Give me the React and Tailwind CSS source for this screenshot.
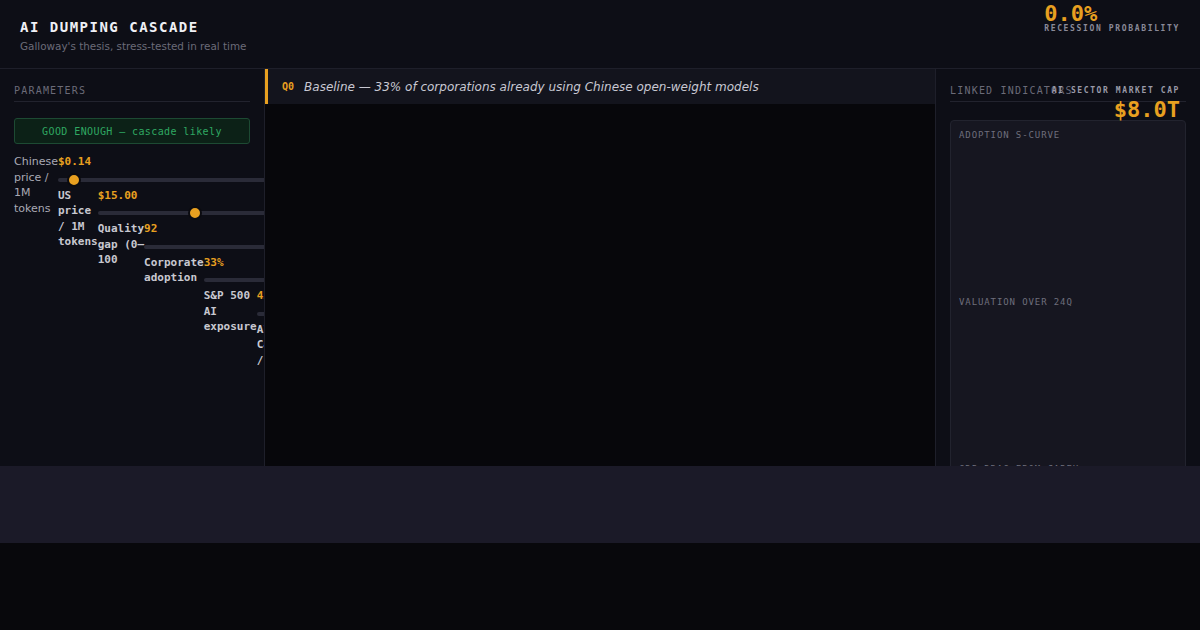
import React from "react";

const MONO = { fontFamily: '"DejaVu Sans Mono", monospace' };
const SANS = { fontFamily: '"DejaVu Sans", sans-serif' };

const PARAMS = [
  { label: "Chinese price / 1M tokens", value: "$0.14", thumb: 16, plain: true },
  { label: "US price / 1M tokens", value: "$15.00", thumb: 97 },
  { label: "Quality gap (0–100", value: "92", thumb: 150 },
  { label: "Corporate adoption", value: "33%", thumb: 90 },
  { label: "S&P 500 AI exposure", value: "42%", thumb: 80 },
  { label: "AI Capex / GDP", value: "1.8%", thumb: 60 },
];

function Param({ i }) {
  const p = PARAMS[i];
  return (
    <div className="flex">
      <div
        className={`w-min shrink-0 text-[11px] leading-[15.5px] ${
          p.plain ? "text-[#a9a9b4]" : "font-bold text-[#c8c8d0]"
        }`}
        style={p.plain ? SANS : MONO}
      >
        {p.label}
      </div>
      <div className="flex-1 min-w-0">
        <div className="text-[11px] leading-[15.5px] font-bold text-[#e8a020]" style={MONO}>
          {p.value}
        </div>
        <div className="relative w-[420px] h-1 mt-2 mb-1.5 rounded-full bg-[#2a2b38]">
          <div
            className="absolute top-1/2 w-[14px] h-[14px] -translate-x-1/2 -translate-y-1/2 rounded-full bg-[#e8a020] border-2 border-[#0b0b10]"
            style={{ left: p.thumb }}
          />
        </div>
        {i + 1 < PARAMS.length && <Param i={i + 1} />}
      </div>
    </div>
  );
}

function SectionTitle({ children }) {
  return (
    <div
      className="text-[10px] leading-[14px] tracking-[1.2px] text-[#6b6b78] pt-px pb-[3px] border-b border-[#22232e]"
      style={MONO}
    >
      {children}
    </div>
  );
}

export default function App() {
  return (
    <div className="w-[1200px] h-[630px] bg-[#08080c] overflow-hidden">
      <header className="relative h-[69px] bg-[#0d0e16] border-b border-[#1e1f2a] pl-5 pt-[17px]">
        <h1 className="text-[14px] leading-5 font-bold tracking-[1.5px] text-[#f0f0f5]" style={MONO}>
          AI DUMPING CASCADE
        </h1>
        <p className="mt-0.5 text-[10.4px] leading-[14px] text-[#6b6b78]" style={SANS}>
          Galloway's thesis, stress-tested in real time
        </p>
        <div className="absolute top-[3px] right-5" style={MONO}>
          <div className="text-[22px] leading-none font-bold text-[#e8a020]">0.0%</div>
          <div className="text-[8px] leading-[8px] font-bold tracking-[1.65px] text-[#8a8a98]">
            RECESSION PROBABILITY
          </div>
        </div>
      </header>

      <main className="flex h-[397px] overflow-hidden">
        <aside className="w-[265px] shrink-0 bg-[#0d0e16] border-r border-[#1e1f2a] px-3.5 pt-3.5 overflow-hidden">
          <SectionTitle>PARAMETERS</SectionTitle>
          <div
            className="mt-4 h-[26px] flex items-center justify-center rounded-[3px] bg-[#0c2117] border border-[#1d4a33] text-[10px] font-medium tracking-[0.4px] text-[#2fa862]"
            style={MONO}
          >
            GOOD ENOUGH — cascade likely
          </div>
          <div className="mt-2.5 -mr-3.5">
            <Param i={0} />
          </div>
        </aside>

        <section className="w-[670px] shrink-0 bg-[#07070b]">
          <div className="h-[35px] flex items-center gap-2.5 bg-[#13141d] border-l-[3px] border-[#e8a020] pl-3.5">
            <span className="text-[10px] font-bold text-[#e8a020]" style={MONO}>
              Q0
            </span>
            <span className="text-[12px] italic text-[#c8c8d2]" style={SANS}>
              Baseline — 33% of corporations already using Chinese open-weight models
            </span>
          </div>
        </section>

        <aside className="relative flex-1 bg-[#0d0e16] border-l border-[#1e1f2a] px-3.5 pt-3.5">
          <SectionTitle>LINKED INDICATORS</SectionTitle>
          <div className="absolute top-[18px] right-5 text-right" style={MONO}>
            <div className="text-[8px] leading-[8px] font-bold tracking-[1.6px] text-[#9a9aa8]">
              AI SECTOR MARKET CAP
            </div>
            <div className="mt-1 text-[22px] leading-none font-bold text-[#e8a020]">$8.0T</div>
          </div>
          <div className="mt-[18px] rounded bg-[#161620] border border-[#22232e] px-2 pt-2">
            {["ADOPTION S-CURVE", "VALUATION OVER 24Q", "GDP DRAG FROM CAPEX"].map((t) => (
              <div key={t} className="h-[167px]">
                <div className="text-[9px] leading-3 tracking-[0.9px] text-[#6e6e7c]" style={MONO}>
                  {t}
                </div>
              </div>
            ))}
          </div>
        </aside>
      </main>

      <footer className="h-[77px] bg-[#1b1a28]" />
    </div>
  );
}
